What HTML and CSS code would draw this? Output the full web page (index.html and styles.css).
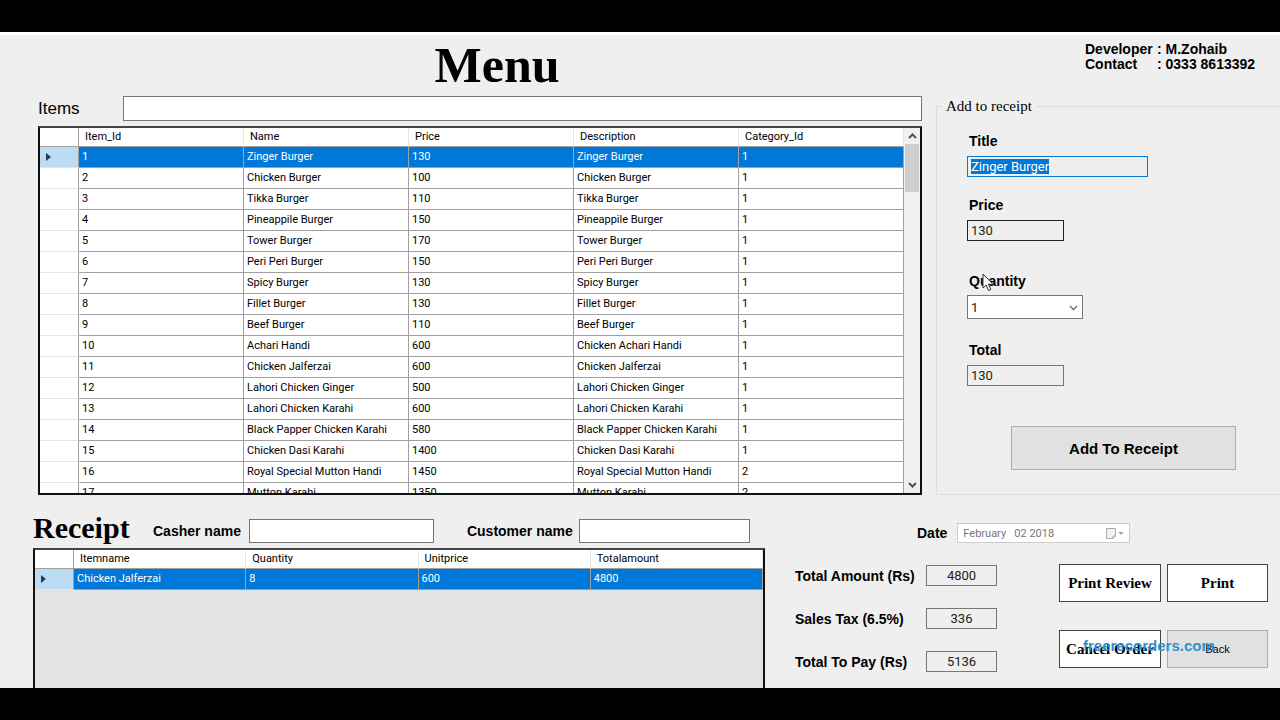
FILE: index.html
```
<!DOCTYPE html>
<html lang="en">
<head>
  <meta charset="UTF-8" />
  <title>Menu</title>
  <meta name="viewport" content="width=device-width, initial-scale=1.0"/>
  <link rel="stylesheet" href="styles.css">
</head>
<body>
  <main class="window">
    <section class="top">
      <div class="left">
        <h1>Menu</h1>
        <div class="search">
          <label for="items">Items</label>
          <input type="text" id="items">
        </div>
        <div class="grid-box items-box">
          <div class="grid-view">
            <table class="grid">
              <thead>
                <tr><th class="mark"></th><th>Item_Id</th><th>Name</th><th>Price</th><th>Description</th><th>Category_Id</th></tr>
              </thead>
              <tbody id="itemRows"></tbody>
            </table>
          </div>
          <div class="scrollbar">
            <svg width="9" height="6" viewBox="0 0 9 6"><path d="M1 5 L4.500 1.500 L8 5" fill="none" stroke="#505050" stroke-width="2"/></svg>
            <div class="thumb"></div>
            <svg class="down" width="9" height="6" viewBox="0 0 9 6"><path d="M1 1 L4.500 4.500 L8 1" fill="none" stroke="#505050" stroke-width="2"/></svg>
          </div>
        </div>
      </div>

      <div class="right">
        <div class="contact">
          <span>Developer</span><span>: M.Zohaib</span>
          <span>Contact</span><span>: 0333 8613392</span>
        </div>
        <fieldset>
          <legend>Add to receipt</legend>
          <label for="title">Title</label>
          <input type="text" id="title" class="wide" value="Zinger Burger" readonly>
          <label for="price">Price</label>
          <input type="text" id="price" class="price" value="130" readonly>
          <label for="quantity" class="qty-label">Quantity
            <svg class="cursor" width="12" height="19" viewBox="0 0 12 19"><path d="M1 1 V15 L4.200 12 L6.500 17.500 L8.800 16.500 L6.500 11.300 H11 Z" fill="#fff" stroke="#333" stroke-width="1"/></svg>
          </label>
          <div class="combo">
            <select id="quantity"><option>1</option><option>2</option><option>3</option></select>
            <svg width="9" height="6" viewBox="0 0 9 6"><path d="M1 1 L4.500 4.500 L8 1" fill="none" stroke="#666" stroke-width="1.300"/></svg>
          </div>
          <label for="total">Total</label>
          <input type="text" id="total" value="130" readonly>
          <button class="add-btn" type="button">Add To Receipt</button>
        </fieldset>
      </div>
    </section>

    <section class="bottom">
      <div class="receipt">
        <div class="receipt-head">
          <h2>Receipt</h2>
          <label for="casher">Casher name</label>
          <input type="text" id="casher" class="casher">
          <label for="customer">Customer name</label>
          <input type="text" id="customer" class="customer">
        </div>
        <div class="grid-box receipt-box">
          <table class="grid">
            <thead>
              <tr><th class="mark"></th><th>Itemname</th><th>Quantity</th><th>Unitprice</th><th>Totalamount</th></tr>
            </thead>
            <tbody>
              <tr class="selected">
                <td class="mark"><svg width="6" height="8" viewBox="0 0 6 8"><path d="M0 0 L5 4 L0 8 Z" fill="#2b3a55"/></svg></td>
                <td>Chicken Jalferzai</td><td>8</td><td>600</td><td>4800</td>
              </tr>
            </tbody>
          </table>
        </div>
      </div>

      <div class="summary">
        <div class="date-row">
          <label for="date">Date</label>
          <div class="date-box">
            <input type="text" id="date" value="February   02 2018" disabled>
            <svg width="20" height="13" viewBox="0 0 20 13"><path d="M1.500 1.500 H10.500 V9 L8 11.500 H1.500 Z" fill="#f2f2f2" stroke="#aaa"/><path d="M10.500 9 H8 V11.500" fill="none" stroke="#aaa"/><path d="M13 5 H19 L16 8 Z" fill="#a8a8a8"/></svg>
          </div>
        </div>
        <div class="summary-body">
          <div class="totals">
            <label for="amount">Total Amount (Rs)</label>
            <input type="text" id="amount" value="4800" readonly>
            <label for="tax">Sales Tax (6.5%)</label>
            <input type="text" id="tax" value="336" readonly>
            <label for="pay">Total To Pay (Rs)</label>
            <input type="text" id="pay" value="5136" readonly>
          </div>
          <div class="actions">
            <button type="button">Print Review</button>
            <button type="button">Print</button>
            <button type="button">Cancel Order</button>
            <button type="button" class="back-btn">Back</button>
            <span class="watermark">freerecorders.com</span>
          </div>
        </div>
      </div>
    </section>
  </main>

  <script>
    const items = [
      ['Zinger Burger', 130, 1],
      ['Chicken Burger', 100, 1],
      ['Tikka Burger', 110, 1],
      ['Pineappile Burger', 150, 1],
      ['Tower Burger', 170, 1],
      ['Peri Peri Burger', 150, 1],
      ['Spicy Burger', 130, 1],
      ['Fillet Burger', 130, 1],
      ['Beef Burger', 110, 1],
      ['Achari Handi', 600, 1, 'Chicken Achari Handi'],
      ['Chicken Jalferzai', 600, 1],
      ['Lahori Chicken Ginger', 500, 1],
      ['Lahori Chicken Karahi', 600, 1],
      ['Black Papper Chicken Karahi', 580, 1],
      ['Chicken Dasi Karahi', 1400, 1],
      ['Royal Special Mutton Handi', 1450, 2],
      ['Mutton Karahi', 1350, 2]
    ];
    const arrow = '<svg width="6" height="8" viewBox="0 0 6 8"><path d="M0 0 L5 4 L0 8 Z" fill="#2b3a55"/></svg>';

    document.getElementById('itemRows').innerHTML = items.map(([name, price, category, description], i) =>
      `<tr class="${i === 0 ? 'selected' : ''}"><td class="mark">${i === 0 ? arrow : ''}</td><td>${i + 1}</td><td>${name}</td><td>${price}</td><td>${description || name}</td><td>${category}</td></tr>`
    ).join('');

    const title = document.getElementById('title');
    title.focus();
    title.select();
  </script>
</body>
</html>
```
FILE: styles.css
```
* { box-sizing: border-box; }
body {
  margin: 0; height: 100vh; padding: 32px 0; background: #000; color: #000;
  font-family: "Liberation Sans", Arial, sans-serif; font-size: 14px; overflow: hidden;
}
.window {
  height: 100%; overflow: hidden; background: #efefef; border-top: 3px solid #fff;
  display: flex; flex-direction: column;
}
h1, h2 { margin: 0; font-family: "Liberation Serif", serif; font-weight: bold; }
label { font-weight: bold; white-space: nowrap; }
input, select {
  font-family: Roboto, Arial, sans-serif; font-size: 13px;
  height: 21px; padding: 0 3px; border: 1px solid #777; border-radius: 0; background: #fff; color: #222;
  outline: none; min-width: 0;
}
input[readonly] { background: #efefef; }
input::selection { background: #0078d7; color: #fff; }

/* top half */
.top { display: grid; grid-template-columns: minmax(0, 884fr) minmax(0, 344fr); column-gap: 14px; padding-left: 38px; }
.left { display: flex; flex-direction: column; }
h1 { font-size: 50px; line-height: 61px; text-align: center; padding-left: 34px; }
.search { display: flex; align-items: center; }
.search label { width: 85px; font-size: 17px; font-weight: normal; }
.search input { flex: 1; height: 25px; }

/* data grids */
.grid-box { border: 2px solid #111; border-top-color: #444; background: #fff; overflow: hidden; }
.items-box { height: 369px; margin-top: 5px; display: flex; }
.grid-view { flex: 1; overflow: hidden; }
.grid {
  width: 100%; table-layout: fixed; border-collapse: separate; border-spacing: 0; background: #fff;
  font-family: Roboto, Arial, sans-serif; font-size: 11px;
}
.grid th, .grid td {
  height: 21px; padding: 0 3px; text-align: left; font-weight: normal; line-height: 20px; white-space: nowrap;
  border-right: 1px solid #a0a0a0; border-bottom: 1px solid #a0a0a0;
}
.grid th { height: 19px; line-height: 18px; padding-left: 6px; border-right-color: #e5e5e5; }
.grid .mark { width: 39px; padding-left: 6px; border-right-color: #a0a0a0; }
.grid td.mark { border-bottom-color: #e5e5e5; }
.grid .mark svg { display: block; }
.grid .selected td { background: #0078d7; color: #fff; }
.grid .selected td.mark { background: #bcdcf4; }
.scrollbar { width: 16px; background: #f0f0f0; display: flex; flex-direction: column; align-items: center; padding: 5px 0; }
.thumb { width: 14px; height: 48px; margin-top: 5px; background: #cdcdcd; }
.down { margin-top: auto; }

/* add to receipt */
.right { display: flex; flex-direction: column; }
.contact {
  height: 61px; padding: 7px 0 0 149px; display: grid; grid-template-columns: 72px 1fr; align-content: start;
  font-weight: bold; line-height: 15px; white-space: pre;
}
fieldset {
  flex: 1; margin: 0; padding: 15px 0 0 30px; border: 1px solid #dcdcdc; border-right: none; min-width: 0;
  display: flex; flex-direction: column; align-items: flex-start;
}
legend { margin-left: -25px; padding: 0 4px; font: 15px/20px "Liberation Serif", serif; }
fieldset label { line-height: 20px; padding-left: 2px; }
fieldset input { width: 97px; margin: 5px 0 18px; }
fieldset .wide { width: 181px; border-color: #0078d7; }
fieldset .price { border-color: #222; margin-bottom: 30px; }
.qty-label { position: relative; }
.cursor { position: absolute; left: 15px; top: 2px; }
.combo { position: relative; margin: 4px 0 21px; }
.combo select { display: block; width: 116px; height: 24px; appearance: none; }
.combo svg { position: absolute; right: 5px; top: 10px; pointer-events: none; }
button { font: bold 15px "Liberation Sans", Arial, sans-serif; color: #000; border-radius: 0; padding: 0; }
.add-btn { width: 225px; height: 44px; margin: 22px 0 0 44px; background: #e1e1e1; border: 1px solid #adadad; }

/* bottom half */
.bottom { flex: 1; min-height: 0; display: grid; grid-template-columns: minmax(0, 732fr) minmax(0, 473fr); column-gap: 30px; padding: 0 12px 0 33px; }
.receipt { display: flex; flex-direction: column; min-height: 0; }
.receipt-head { height: 53px; padding-top: 18px; display: flex; align-items: center; }
h2 { width: 120px; padding-bottom: 6px; font-size: 30px; line-height: 30px; }
.receipt-head input { height: 24px; }
.casher { width: 185px; margin: 0 33px 0 8px; }
.customer { width: 171px; margin-left: 6px; }
.receipt-box { flex: 1; border-bottom: none; background: #e3e3e3; }

.summary { padding-top: 28px; }
.date-row { display: flex; align-items: center; padding-left: 122px; gap: 10px; }
.date-box { display: flex; align-items: center; width: 173px; height: 20px; padding-right: 4px; background: #fff; border: 1px solid #ccc; }
.date-box input { flex: 1; height: 18px; border: none; padding-left: 5px; font-size: 11px; background: none; color: #777; }
.summary-body { display: flex; justify-content: space-between; padding-top: 21px; }
.totals { display: grid; grid-template-columns: 131px 71px; row-gap: 22px; align-content: start; align-items: center; padding-top: 1px; }
.totals input { text-align: center; }
.actions { position: relative; display: grid; grid-template-columns: 102px 101px; gap: 28px 6px; align-content: start; }
.actions button { height: 38px; background: #fff; border: 1px solid #444; font: bold 15px "Liberation Serif", serif; }
.actions .back-btn { background: #e1e1e1; border-color: #adadad; font: 11px "Liberation Sans", Arial, sans-serif; }
.watermark { position: absolute; left: 24px; top: 72px; color: #2f8fce; font-weight: bold; font-size: 15px; line-height: 20px; }
```
